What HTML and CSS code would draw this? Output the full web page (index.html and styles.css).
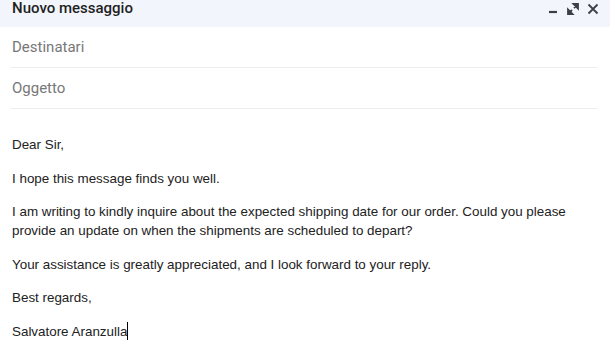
FILE: index.html
```html
<!DOCTYPE html>
<html lang="it">
<head>
<meta charset="utf-8">
<link rel="stylesheet" href="styles.css">
</head>
<body>
<div class="compose">
  <div class="header">
    <span class="title">Nuovo messaggio</span>
    <div class="actions">
      <svg class="icon" viewBox="0 0 14 14" width="14" height="14"><path d="M3 10h8" stroke="#3c4043" stroke-width="2.2"/></svg>
      <svg class="icon" viewBox="0 0 14 14" width="14" height="14"><path d="M7.5 2h4.5v4.5zM2 12V7.5L6.5 12zM11 3L8 6M3 11l3-3" stroke="#3c4043" stroke-width="1.8" fill="#3c4043" stroke-linejoin="miter"/></svg>
      <svg class="icon" viewBox="0 0 14 14" width="14" height="14"><path d="M2.5 2.5l9 9M11.5 2.5l-9 9" stroke="#3c4043" stroke-width="1.8"/></svg>
    </div>
  </div>
  <div class="field">Destinatari</div>
  <div class="field">Oggetto</div>
  <div class="body">
    <p>Dear Sir,</p>
    <p>I hope this message finds you well.</p>
    <p>I am writing to kindly inquire about the expected shipping date for our order. Could you please provide an update on when the shipments are scheduled to depart?</p>
    <p>Your assistance is greatly appreciated, and I look forward to your reply.</p>
    <p>Best regards,</p>
    <p>Salvatore Aranzulla<span class="caret"></span></p>
  </div>
</div>
</body>
</html>
```
FILE: styles.css
```css
html, body {
  margin: 0;
  padding: 0;
  background: #fff;
}
.compose {
  width: 610px;
  height: 343px;
  overflow: hidden;
}
.header {
  height: 27px;
  background: #f2f6fc;
  display: flex;
  align-items: center;
  justify-content: space-between;
  padding: 0 10px 0 12px;
}
.title {
  font-family: Roboto, "Open Sans", sans-serif;
  font-weight: 500;
  font-size: 15px;
  color: #1f1f1f;
  margin-top: -12px;
}
.actions {
  display: flex;
  gap: 6px;
  align-items: center;
  margin-top: -10px;
}
.icon { display: block; }
.field {
  margin: 0 12px 0 10px;
  padding-left: 2px;
  height: 40px;
  border-bottom: 1px solid #eceff1;
  display: flex;
  align-items: center;
  font-family: Roboto, sans-serif;
  font-size: 15px;
  color: #777;
}
.body {
  padding: 26px 12px 0 12px;
  font-family: "Liberation Sans", Arial, sans-serif;
  font-size: 13.4px;
  line-height: 19px;
  color: #222;
}
.body p {
  margin: 0 0 14.5px 0;
}
.caret {
  display: inline-block;
  width: 1px;
  height: 18px;
  background: #000;
  vertical-align: -4px;
}
```
